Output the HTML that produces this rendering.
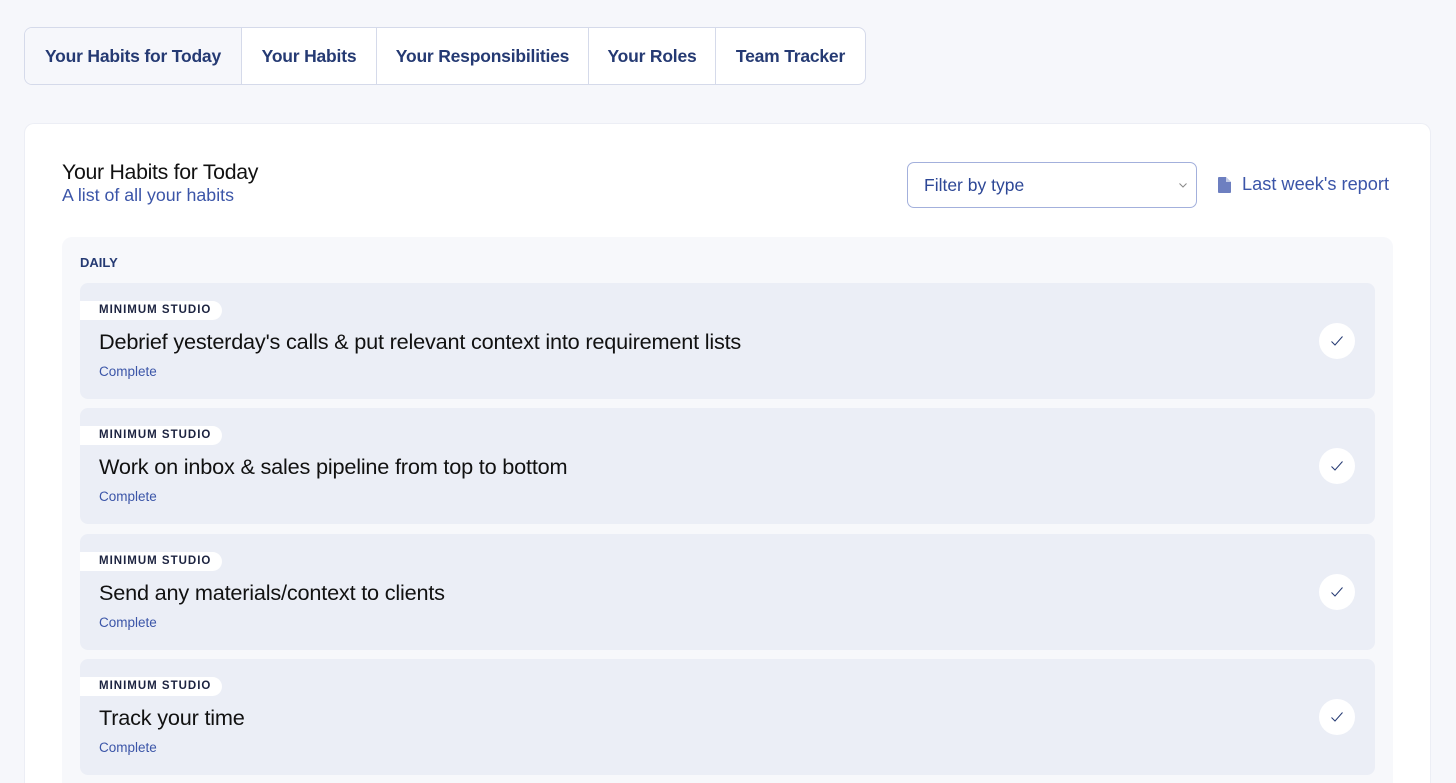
<!DOCTYPE html>
<html><head><meta charset="utf-8"><style>
*{box-sizing:border-box;margin:0;padding:0}
html,body{width:1456px;height:783px;overflow:hidden}
body{background:#f6f7fb;font-family:"Liberation Sans",sans-serif;position:relative}
.tabs{position:absolute;left:24px;top:27px;height:58px;width:842px;border:1px solid #d5daea;border-radius:8px;background:#fff;display:flex;overflow:hidden}
.tab{height:100%;display:flex;align-items:center;justify-content:center;color:#253a73;font-weight:bold;font-size:17.5px;border-right:1px solid #d5daea;letter-spacing:-0.2px}
.tab:last-child{border-right:none}
.card{position:absolute;left:24px;top:123px;width:1407px;height:660px;background:#fff;border:1px solid #eceef5;border-bottom:none;border-radius:10px 10px 0 0}
h1{position:absolute;left:62px;top:160px;font-size:21.3px;font-weight:normal;color:#111;letter-spacing:-0.3px}
.sub{position:absolute;left:62px;top:185px;font-size:17.8px;color:#3b55a8}
.sel{position:absolute;left:907px;top:162px;width:290px;height:46px;border:1px solid #a3b0dc;border-radius:7px;color:#2d4796;font-size:17.5px;padding:12px 0 0 16px}
.sel svg{position:absolute;right:9px;top:20px}
.rep{position:absolute;left:1218px;top:174px;color:#3b55a8;font-size:18.2px;display:flex;align-items:center;gap:11px}
.sec{position:absolute;left:62px;top:237px;width:1331px;height:546px;background:#f7f8fb;border-radius:10px 10px 0 0}
.daily{position:absolute;left:80px;top:255px;font-size:13px;font-weight:bold;color:#253a73}
.item{position:absolute;left:80px;width:1295px;height:116px;background:#ebeef6;border-radius:8px}
.pill{position:absolute;left:0;top:18px;height:19px;width:142px;background:#fff;border-radius:0 10px 10px 0;font-size:11.5px;font-weight:bold;letter-spacing:1px;color:#1c2340;padding:3px 0 0 19px}
.t{position:absolute;left:19px;top:46px;font-size:21.7px;color:#111;letter-spacing:-0.2px}
.c{position:absolute;left:19px;top:81px;font-size:13.5px;color:#3b55a8}
.chk{position:absolute;left:1239px;top:40px;width:36px;height:36px;border-radius:50%;background:#fff;display:flex;align-items:center;justify-content:center}
</style></head><body>
<div class="tabs">
<div class="tab" style="width:217px;background:#f6f7fb">Your Habits for Today</div>
<div class="tab" style="width:135px">Your Habits</div>
<div class="tab" style="width:212px">Your Responsibilities</div>
<div class="tab" style="width:127px">Your Roles</div>
<div class="tab" style="flex:1">Team Tracker</div>
</div>
<div class="card"></div>
<h1>Your Habits for Today</h1>
<div class="sub">A list of all your habits</div>
<div class="sel">Filter by type<svg width="8" height="5"><path d="M.5.5l3.5 3.5 3.5-3.5" fill="none" stroke="#888" stroke-width="1"/></svg></div>
<div class="rep"><svg width="13" height="16" viewBox="0 0 13 16"><path d="M1 0h7l5 5v10a1 1 0 0 1-1 1H1a1 1 0 0 1-1-1V1a1 1 0 0 1 1-1z" fill="#6d7fc0"/><path d="M8 0v5h5" fill="#fff" opacity=".6"/></svg>Last week's report</div>
<div class="sec"></div>
<div class="daily">DAILY</div>
<div class="item" style="top:283px"><div class="pill">MINIMUM STUDIO</div><div class="t">Debrief yesterday's calls &amp; put relevant context into requirement lists</div><div class="c">Complete</div><div class="chk"><svg width="14" height="12"><path d="M1.5 6.5l3.5 3.5 7.5-8.5" fill="none" stroke="#253a73" stroke-width="1"/></svg></div></div>
<div class="item" style="top:408px"><div class="pill">MINIMUM STUDIO</div><div class="t">Work on inbox &amp; sales pipeline from top to bottom</div><div class="c">Complete</div><div class="chk"><svg width="14" height="12"><path d="M1.5 6.5l3.5 3.5 7.5-8.5" fill="none" stroke="#253a73" stroke-width="1"/></svg></div></div>
<div class="item" style="top:534px"><div class="pill">MINIMUM STUDIO</div><div class="t">Send any materials/context to clients</div><div class="c">Complete</div><div class="chk"><svg width="14" height="12"><path d="M1.5 6.5l3.5 3.5 7.5-8.5" fill="none" stroke="#253a73" stroke-width="1"/></svg></div></div>
<div class="item" style="top:659px"><div class="pill">MINIMUM STUDIO</div><div class="t">Track your time</div><div class="c">Complete</div><div class="chk"><svg width="14" height="12"><path d="M1.5 6.5l3.5 3.5 7.5-8.5" fill="none" stroke="#253a73" stroke-width="1"/></svg></div></div>
</body></html>
